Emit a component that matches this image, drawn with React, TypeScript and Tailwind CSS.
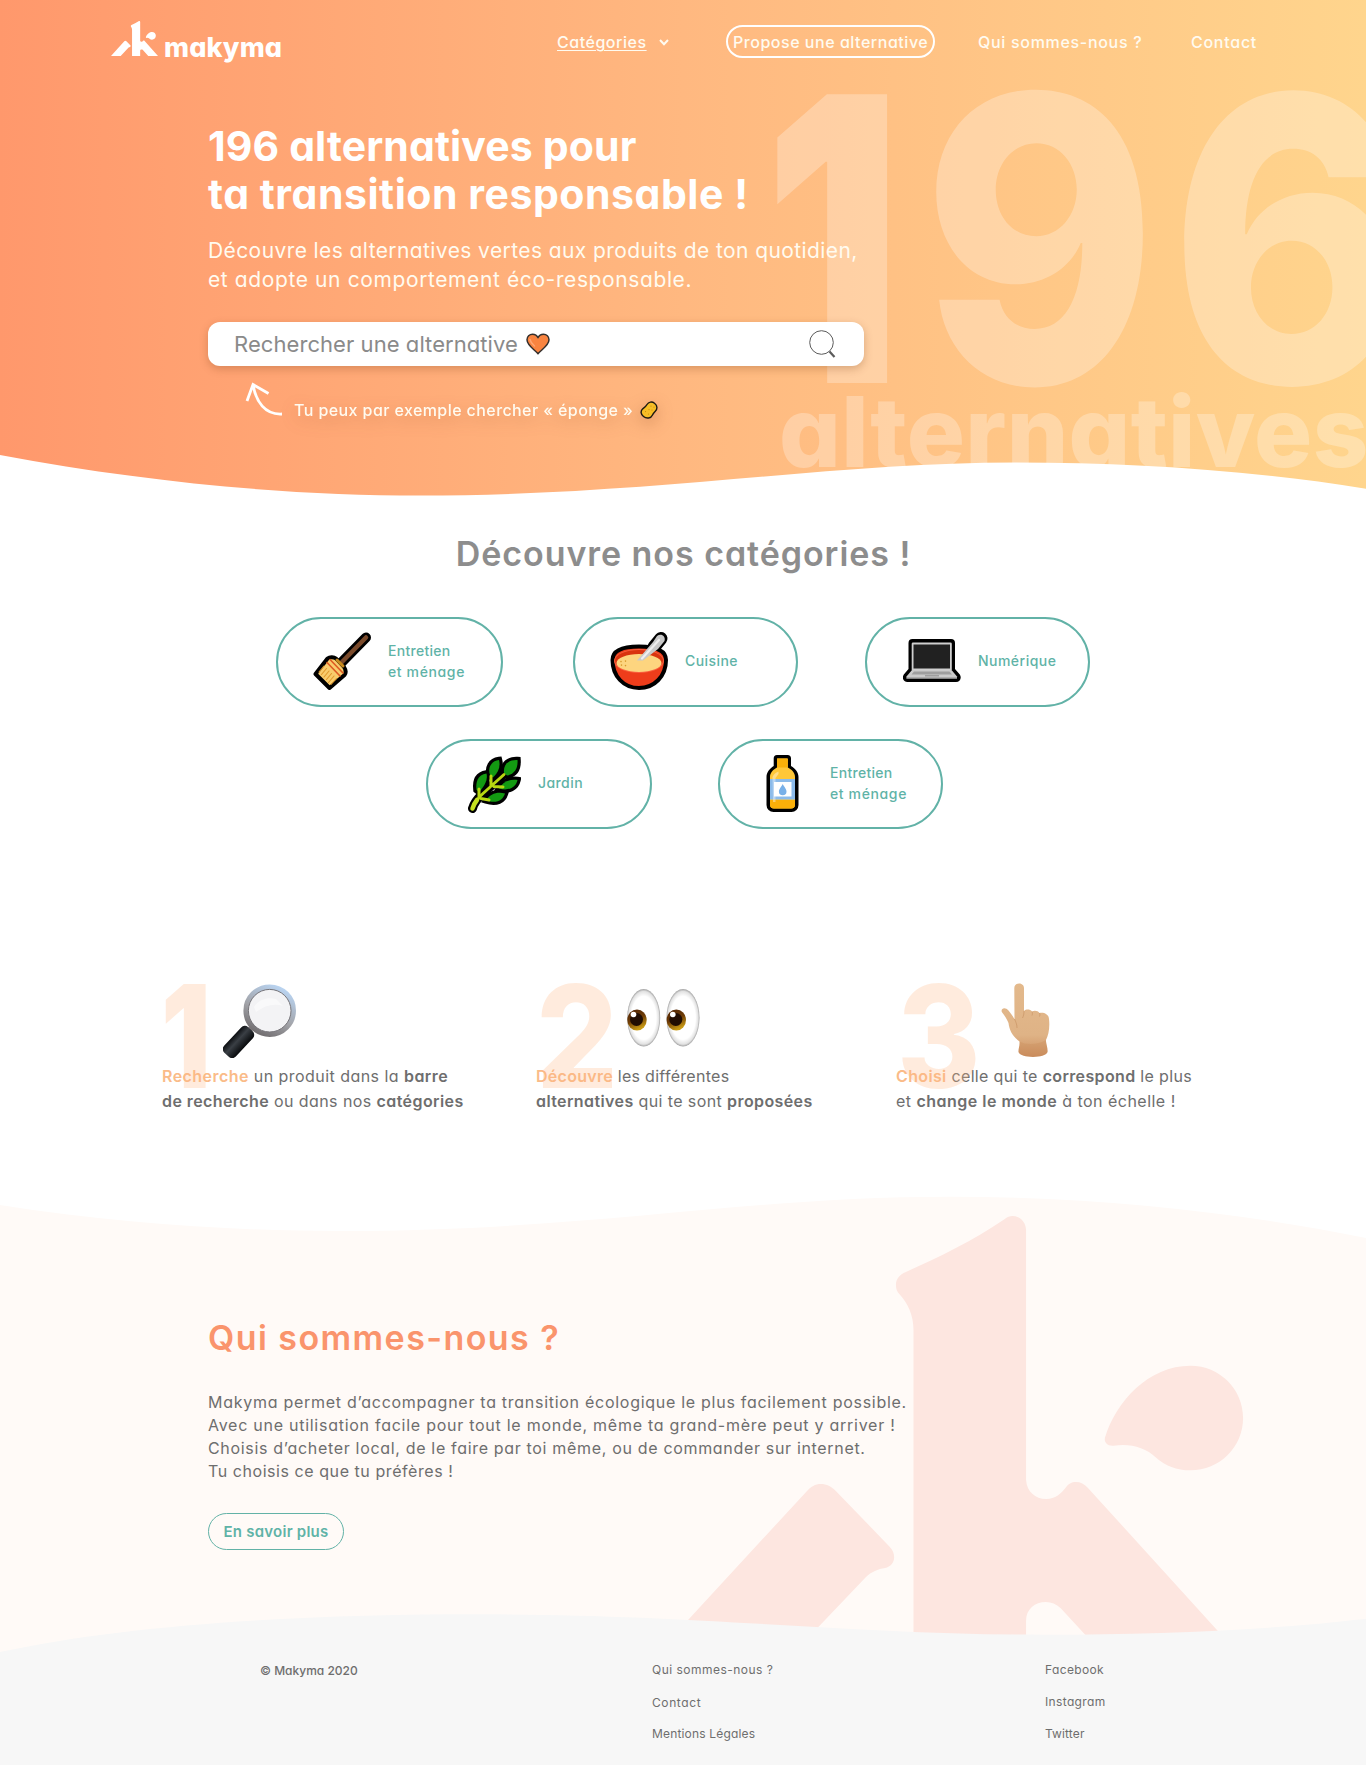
import type { ReactNode } from "react";

function KMark({ className }: { className: string }) {
  return (
    <svg viewBox="622 1216 651 476" preserveAspectRatio="none" className={className} fill="currentColor" aria-hidden="true">
      <g transform="translate(660 1180) scale(.45026 .33333)">
        <path d="M813 150V900C815 935 833 957 858 957C878 957 890 942 900 925C907 911 914 906 924 906C934 906 942 912 950 923L1362 1536H1062L890 1285C880 1272 869 1266 857 1266C833 1266 813 1287 813 1322V1536H563V450C563 405 550 370 532 343C526 334 524 326 524 315C524 297 532 284 546 276C620 232 695 182 765 118C771 111 777 108 783 108C800 108 813 127 813 150Z" />
        <path d="M325 935C335 920 345 912 357 912C370 912 381 920 390 932L510 1100C517 1110 520 1120 520 1132C520 1148 512 1161 500 1164C484 1167 470 1175 457 1192L214 1536H-85Z" />
        <path d="M1178 557C1243 557 1295 627 1295 714C1295 801 1243 871 1178 871C1148 871 1121 856 1102 833C1077 802 1045 790 1008 797C995 799 986 788 988 774C1012 665 1085 557 1178 557Z" />
      </g>
    </svg>
  );
}

function Broom() {
  return (
    <svg viewBox="0 0 58 58" className="mb-[2px] size-[58px] shrink-0" strokeLinecap="round" strokeLinejoin="round" fill="none">
      <path d="M53 5.500 28 31" stroke="#000" strokeWidth="10" />
      <path d="M14.500 26.500C17 24.500 21 25 23 26.500L31 35C33 38 33 41 31.500 43L16.500 56 2.500 42Z" fill="#F9CC6C" stroke="#000" strokeWidth="4" />
      <path d="M53 5.500 28 31" stroke="#7A4A2B" strokeWidth="4.500" />
      <path d="M24 28 30 34" stroke="#C88A1E" strokeWidth="3" />
      <path d="M14 30.500 27 44M17 27.500 30 41" stroke="#DE5A22" strokeWidth="1.600" />
      <path d="M11 34 6 40M13.500 36.500 8.500 42.500M16 39 11 45M18.500 41.500 13.500 47.500M21 44 15.500 50.500M23.500 46.500 18 52.500" stroke="#E0992C" strokeWidth="1.100" />
    </svg>
  );
}

function Bowl() {
  return (
    <svg viewBox="0 0 58 58" className="mb-[3px] size-[58px] shrink-0 overflow-visible" strokeLinecap="round" strokeLinejoin="round" fill="none">
      <path d="M51 6.500 44 15" stroke="#000" strokeWidth="13" />
      <path d="M2.500 28C2.500 18 14 14.500 29 14.500S56 18 56 28C56 44 44.500 56 29 56S2.500 44 2.500 28Z" fill="#EE3D1B" stroke="#000" strokeWidth="4" />
      <ellipse cx="29" cy="29" rx="25" ry="12" fill="#F9603F" />
      <ellipse cx="29" cy="28.500" rx="24" ry="10.500" fill="#D9330F" />
      <ellipse cx="29" cy="31" rx="22.500" ry="9" fill="#FDD57F" />
      <path d="M47 4C51 .8 56 4 54.500 9L48 17 33 28.500H27L43 10Z" fill="#C9C9C9" />
      <path d="M49 8 32 26.500" stroke="#EFEFEF" strokeWidth="2.200" />
      <path d="M11 29.500v.1M15.500 29v.1M11.500 33v.1M15.500 33.500v.1" stroke="#D79A2B" strokeWidth="1.600" />
    </svg>
  );
}

function Laptop() {
  return (
    <svg viewBox="0 0 58 58" className="mb-[2px] ml-px size-[58px] shrink-0">
      <path d="M9.500 7H48a4 4 0 0 1 4 4V37l4.800 5.500C59 46 57 50 53 50H4.500C.5 50-1.500 46 .8 42.500L5.500 37V11a4 4 0 0 1 4-4Z" fill="#000" />
      <path d="M10 10.500H47.500a1.300 1.300 0 0 1 1.300 1.300V38H8.700V11.800A1.300 1.300 0 0 1 10 10.500Z" fill="#CFCFCF" />
      <path d="M10.500 12.500H47V36.500H10.500Z" fill="#212121" />
      <path d="M9 38H48.500L54 44.500V46.500H3.500V44.500Z" fill="#CBCBCB" />
      <path d="M11 39.500H46.500L49 42.500H8.500Z" fill="#9E9E9E" />
      <path d="M22 43H36V44.500H22Z" fill="#9E9E9E" />
      <path d="M3.500 45.500H54V46.800H3.500Z" fill="#8D8D8D" />
    </svg>
  );
}

function LeafArt({ outline }: { outline?: boolean }) {
  const leaf = outline ? "#000" : "#139A12";
  return (
    <g fill={leaf} stroke={outline ? "#000" : "none"} strokeWidth={outline ? 6.5 : 0} strokeLinejoin="miter">
      <path d="M54.500 5C55 13 52 19 44 20.500L41 18C40 9 46 4.500 54.500 5Z" />
      <path d="M36 5C37.500 11 36 17 30 22.500L27 20C24.500 13 28 6 36 5Z" />
      <path d="M23.500 18.500C25 24 22 31 16 37L13.500 35C12.500 27 14.500 20 23.500 18.500Z" />
      <path d="M54.500 25C53 32 46 36.500 36 33.500C40 27 46 24 54.500 25Z" />
      <path d="M42 38.500C40 45 34 49 23 45.500C27 39 34 36.500 42 38.500Z" />
    </g>
  );
}

function Leaf() {
  return (
    <svg viewBox="0 0 58 58" className="size-[58px] shrink-0" strokeLinecap="round" fill="none">
      <LeafArt outline />
      <path d="M9.500 53.500C11 48 15 43 20 38.500L42 18" stroke="#000" strokeWidth="9" />
      <LeafArt />
      <path d="M9.500 53.500C11 48 15 43 20 38.500L41 19.500M28 31V21M16 42V34M31 31.500 40 32M18 43.500 26 45" stroke="#B7D711" strokeWidth="3" />
      <path d="M9.500 53.500C10.500 50 12 47.500 14 45" stroke="#C5E020" strokeWidth="4.500" />
    </svg>
  );
}

function Bottle() {
  return (
    <svg viewBox="1.500 0 58 58" className="size-[58px] shrink-0">
      <path d="M23.500 0H34a3.500 3.500 0 0 1 3.500 3.500V11C42 13.500 45 17.500 45 22V50a7 7 0 0 1-7 7H20a7 7 0 0 1-7-7V22C13 17.500 16 13.500 20.200 11V3.500A3.500 3.500 0 0 1 23.500 0Z" fill="#000" />
      <path d="M24 3.500H33.500a.8.8 0 0 1 .8.8V12.500C39 15 41.500 18 41.500 22V49.500a4 4 0 0 1-4 4H20.500a4 4 0 0 1-4-4V22C16.500 18 19 15 23.500 12.500V4.300A.8.8 0 0 1 24 3.500Z" fill="#FFC738" />
      <path d="M23.500 3.500H34.300V12.500H23.500ZM16.500 45H41.500V49.500a4 4 0 0 1-4 4H20.500a4 4 0 0 1-4-4Z" fill="#FAB009" />
      <path d="M16.500 24H41.500V44.500H16.500Z" fill="#8CBBEA" />
      <path d="M20.500 27H38V41.500H20.500Z" fill="#fff" />
      <path d="M29.200 29C31.500 33 33 34.500 33 36.500A3.800 3.800 0 0 1 25.400 36.500C25.400 34.500 27 33 29.200 29Z" fill="#78B0E8" />
      <path d="M19 22C20 19.500 22 17.500 25 16.500V19L22 23V47H19.500Z" fill="#fff" opacity=".4" />
    </svg>
  );
}

function Magnifier() {
  return (
    <svg viewBox="0 0 73 74" className="h-[74px] w-[73px]">
      <defs>
        <linearGradient id="ring" x1=".2" y1="1" x2=".7" y2="0">
          <stop offset="0" stopColor="#6E6A6C" />
          <stop offset=".45" stopColor="#A2A3A8" />
          <stop offset="1" stopColor="#B9D3F0" />
        </linearGradient>
        <linearGradient id="grip" x1="0" y1="0" x2="1" y2="0">
          <stop offset="0" stopColor="#0C0E11" />
          <stop offset=".4" stopColor="#3A3F45" />
          <stop offset="1" stopColor="#07090B" />
        </linearGradient>
      </defs>
      <path d="M24 48 32 41" stroke="#8A7F80" strokeWidth="5" />
      <rect x="-8" y="-17.500" width="16" height="35" rx="5" fill="url(#grip)" transform="translate(15.500 58) rotate(43)" />
      <circle cx="46.700" cy="26.700" r="23.800" fill="#F3F3F5" stroke="url(#ring)" strokeWidth="5" />
      <circle cx="46.700" cy="26.700" r="21.300" fill="none" stroke="#77757A" strokeWidth="1" />
      <path d="M31 23C36 15 45 13 53 15L60 22C52 19 42 21 33 28Z" fill="#fff" opacity=".5" />
    </svg>
  );
}

function Eyes() {
  return (
    <svg viewBox="0 0 73 58" className="h-[58px] w-[73px]">
      <defs>
        <radialGradient id="white">
          <stop offset=".75" stopColor="#fff" />
          <stop offset=".92" stopColor="#E2E2E2" />
          <stop offset="1" stopColor="#A2A2A2" />
        </radialGradient>
        <linearGradient id="iris" x1="0" y1="0" x2=".4" y2="1">
          <stop offset="0" stopColor="#4E2204" />
          <stop offset=".55" stopColor="#6E3C06" />
          <stop offset="1" stopColor="#C99A14" />
        </linearGradient>
      </defs>
      {[0, 39.3].map((x) => (
        <g key={x} transform={`translate(${x} 0)`}>
          <ellipse cx="16.700" cy="28.800" rx="16.500" ry="28.700" fill="url(#white)" />
          <ellipse cx="10" cy="31" rx="9.700" ry="10.600" fill="url(#iris)" />
          <circle cx="9.500" cy="30.500" r="6.500" fill="#210D02" />
          <circle cx="6.500" cy="25.500" r="2.800" fill="#fff" />
        </g>
      ))}
    </svg>
  );
}

function Hand() {
  return (
    <svg viewBox="0 0 49 74" className="h-[74px] w-[49px]">
      <defs>
        <linearGradient id="skin" x1=".5" y1="0" x2=".5" y2="1">
          <stop offset="0" stopColor="#E3B98C" />
          <stop offset=".7" stopColor="#DFB386" />
          <stop offset="1" stopColor="#CC8F60" />
        </linearGradient>
      </defs>
      <path d="M13.300 5C13.300-1 23-1 23 5V28C25 26 29 26 31 28.500C34 27 37 28 38.500 30C43 29 48 31.500 48 36C49 45 47.500 52 45 57C44.500 60 47 65 46.500 69C44 75.500 20 75.500 17.500 69C17.500 65 19 62 18.500 58.500C11 53 8.500 47 7.500 40C5.500 35 3 32 .8 29C-.5 25.500 4 23.500 7.500 27.500C10 30.500 11.500 33 13.500 36Z" fill="url(#skin)" />
      <path d="M18.500 58.500C25 62.500 38 61.500 45 57C45 60 46.800 64 46.500 69C44 75.500 20 75.500 17.500 69C17.500 65 19 62 18.500 58.500Z" fill="#C4824F" opacity=".25" />
      <path d="M23 28C23 31 22.500 33 21.500 35M31 28.500C31.500 30 31.500 31 31 32.500M38.500 30C39 31 39 32 38.500 33.500M13.500 36C15 39 16 42 16 45" fill="none" stroke="#B97D4B" strokeWidth=".8" opacity=".5" />
    </svg>
  );
}

function Category({ className, icon, children }: { className: string; icon: ReactNode; children: ReactNode }) {
  return (
    <a className={`flex h-[90px] items-center gap-[17px] rounded-full border-2 border-[#62B2A7] pl-[35px] text-sm/[21px] font-medium text-[#5FB3A7] ${className}`}>
      {icon}
      <span className="pb-[3px] whitespace-nowrap">{children}</span>
    </a>
  );
}

function Lead({ children }: { children: ReactNode }) {
  return <span className="font-semibold text-[#FABB88]">{children}</span>;
}

function B({ children }: { children: ReactNode }) {
  return <b className="font-semibold">{children}</b>;
}

export default function App() {
  return (
    <div className="w-[1366px] overflow-hidden bg-white font-['Inter',sans-serif] whitespace-nowrap [font-feature-settings:'cv11']">
      <section className="relative h-[496px] overflow-hidden bg-linear-to-r from-[#FF986C] via-[#FFB880] to-[#FFD58D] text-white">
        <div className="absolute inset-0 font-extrabold text-white/27" aria-hidden="true">
          <span className="absolute top-[40px] left-[764px] origin-left scale-x-[.765] text-[397px] leading-none font-black">1</span>
          <span className="absolute top-[40px] left-[922px] origin-left scale-x-[.895] text-[397px] leading-none">9</span>
          <span className="absolute top-[40px] left-[1170px] origin-left scale-x-[.9] text-[397px] leading-none">6</span>
          <span className="absolute top-[383px] left-[779px] text-[97px] leading-none tracking-[.003em]">alternatives</span>
        </div>
        <svg viewBox="0 0 1366 496" className="absolute inset-0 h-[496px] w-[1366px]" aria-hidden="true">
          <path d="M0 455C150 483 290 495.500 420 495.500C650 495.500 830 462.500 1015 462.500C1130 462.500 1250 470 1366 488.700V496H0Z" fill="#fff" />
        </svg>

        <div className="relative">
          <header className="flex h-[83px] items-start pl-[111px]">
            <a className="flex w-[446px] pt-[21px]">
              <KMark className="h-[35px] w-[47px]" />
              <span className="mt-[13px] ml-[6px] text-[27px] leading-none font-extrabold tracking-[.004em]">makyma</span>
            </a>
            <nav className="flex h-[83px] items-center text-base font-medium text-[#FFFBF0]">
              <a className="flex w-[169px] items-center gap-[12px] pt-px tracking-[.033em]">
                <span className="underline decoration-1 underline-offset-2">Catégories</span>
                <svg viewBox="0 0 10 7" className="h-[7px] w-[10px]" fill="none" stroke="currentColor" strokeWidth="2">
                  <path d="M1 1 5 5.200 9 1" />
                </svg>
              </a>
              <a className="flex h-[33px] w-[209px] items-center rounded-full border-2 border-white pt-px pl-[5px] tracking-[.033em]">Propose une alternative</a>
              <a className="ml-[43px] w-[213px] pt-px tracking-[.043em]">Qui sommes-nous ?</a>
              <a className="pt-px tracking-[.046em]">Contact</a>
            </nav>
          </header>

          <div className="pl-[208px]">
            <h1 className="mt-[39px] text-[41px]/[48px] font-bold">
              <span className="block tracking-[.003em]">196 alternatives pour</span>
              <span className="block tracking-[.013em]">ta transition responsable !</span>
            </h1>
            <p className="mt-[18px] text-[21px]/[29px] text-[#FFFBF0]">
              <span className="block tracking-[.0195em]">Découvre les alternatives vertes aux produits de ton quotidien,</span>
              <span className="block tracking-[.029em]">et adopte un comportement éco-responsable.</span>
            </p>
            <div className="mt-[28px] flex h-[44px] w-[656px] items-center rounded-xl bg-white pr-[28px] pl-[26px] shadow-[0_3px_8px_rgba(120,60,20,0.28)]">
              <span className="text-[22px] tracking-[.003em] text-[#8A8A8A]">Rechercher une alternative</span>
              <svg viewBox="0 0 24 22" className="ml-[8px] h-[22px] w-[24px]" aria-hidden="true">
                <path d="M12 20.800C9 17 1 12.500 1 6.800C1 3.500 3.500 1.200 6.500 1.200C9 1.200 11 2.500 12 4.800C13 2.500 15 1.200 17.500 1.200C20.500 1.200 23 3.500 23 6.800C23 12.500 15 17 12 20.800Z" fill="#F98440" stroke="#35302D" strokeWidth="1.500" strokeLinejoin="round" />
                <path d="M4 6.500C4.500 9 6 11 8.500 13" fill="none" stroke="#FFA672" strokeWidth="1.500" strokeLinecap="round" />
              </svg>
              <svg viewBox="0 0 27 28" className="ml-auto h-[28px] w-[27px]" fill="none" stroke="#5B5B5B" aria-hidden="true">
                <circle cx="12.500" cy="12.500" r="11.800" strokeWidth="1" />
                <path d="M20.500 21.500 25.500 27" strokeWidth="2.200" />
              </svg>
            </div>
            <div className="mt-[16px] flex pl-[37px]">
              <svg viewBox="0 0 38 34" className="h-[34px] w-[38px]" fill="none" stroke="#fff" strokeWidth="2.800" aria-hidden="true">
                <path d="M2 19 8 2.500 23.500 11.500M8 2.500C11 20 20 33 37 32" />
              </svg>
              <div className="ml-[11px] flex drop-shadow-[0_5px_8px_rgba(130,60,20,0.3)]">
                <span className="mt-[18px] text-base/[20px] font-medium tracking-[.026em] text-[#FFFBF0]">Tu peux par exemple chercher « éponge »</span>
                <svg viewBox="0 0 18 18" className="mt-[19px] ml-[7px] size-[18px]" aria-hidden="true">
                  <path d="M7 3.500C8.500.8 12 .3 14.500 2.200C17.500 4.500 17.500 8 15.500 10C14 11.500 13.500 12 12.500 14C11 17.500 6.500 18 3.500 15.500C.5 13 .5 10 2.500 8C4.500 6.500 6 5.500 7 3.500Z" fill="#F7BE26" stroke="#1E1A12" strokeWidth="1.400" />
                  <path d="M11 5v.1M14 6v.1M9 8.500v.1M5.500 10.500v.1M8.500 13v.1M12 9v.1" stroke="#C98A10" strokeWidth="1.200" strokeLinecap="round" />
                </svg>
              </div>
            </div>
          </div>
        </div>
      </section>

      <section className="h-[485px]">
        <h2 className="pt-[38px] pl-px text-center text-[34px]/[40px] font-semibold tracking-[.028em] text-[#8D8D8D]">Découvre nos catégories !</h2>
        <div className="mt-[43px] flex pl-[276px]">
          <Category className="w-[227px]" icon={<Broom />}>
            <span className="block tracking-[.02em]">Entretien</span>
            <span className="block tracking-[.045em]">et ménage</span>
          </Category>
          <Category className="ml-[70px] w-[225px]" icon={<Bowl />}>
            <span className="tracking-[.03em]">Cuisine</span>
          </Category>
          <Category className="ml-[67px] w-[225px]" icon={<Laptop />}>
            <span className="tracking-[.034em]">Numérique</span>
          </Category>
        </div>
        <div className="mt-8 flex pl-[426px]">
          <Category className="w-[226px]" icon={<Leaf />}>
            <span className="tracking-[.03em]">Jardin</span>
          </Category>
          <Category className="ml-[66px] w-[225px]" icon={<Bottle />}>
            <span className="block tracking-[.02em]">Entretien</span>
            <span className="block tracking-[.045em]">et ménage</span>
          </Category>
        </div>
      </section>

      <section className="flex h-[215px] pl-[162px] text-base/[25px] text-[#6E6E6E]">
        <div className="relative w-[374px]">
          <div className="flex h-[83px] items-start pt-[3px] pl-[61px]"><Magnifier /></div>
          <p className="tracking-[.028em]"><Lead>Recherche</Lead> un produit dans la <B>barre</B></p>
          <p className="tracking-[.026em]"><B>de recherche</B> ou dans nos <B>catégories</B></p>
          <span className="absolute top-[-17px] left-[-1px] origin-left scale-x-[.77] text-[143px] leading-none font-black text-[#FFB482]/27">1</span>
        </div>
        <div className="relative w-[360px]">
          <div className="flex h-[83px] items-start pt-[8px] pl-[91px]"><Eyes /></div>
          <p className="tracking-[.018em]"><Lead>Découvre</Lead> les différentes</p>
          <p className="tracking-[.025em]"><B>alternatives</B> qui te sont <B>proposées</B></p>
          <span className="absolute top-[-17px] left-0 origin-left scale-x-[.9] text-[143px] leading-none font-extrabold text-[#FFB482]/27">2</span>
        </div>
        <div className="relative">
          <div className="flex h-[83px] items-start pt-[2px] pl-[105px]"><Hand /></div>
          <p className="tracking-[.022em]"><Lead>Choisi</Lead> celle qui te <B>correspond</B> le plus</p>
          <p className="tracking-[.03em]">et <B>change le monde</B> à ton échelle !</p>
          <span className="absolute top-[-17px] left-[1px] origin-left scale-x-[.89] text-[143px] leading-none font-extrabold text-[#FFB482]/27">3</span>
        </div>
      </section>

      <section className="relative h-[456px] overflow-hidden bg-[#FFFAF7]">
        <svg viewBox="0 0 1366 44" className="absolute top-0 left-0 h-[44px] w-[1366px]" aria-hidden="true">
          <path d="M0 9C120 28 240 35 341 35C590 35 740 .7 950 .7C1090 .7 1240 16 1366 42V0H0Z" fill="#fff" />
        </svg>
        <KMark className="absolute top-[20px] left-[622px] h-[476px] w-[651px] text-[#FDE6E0]" />
        <div className="relative pt-[122px] pl-[208px]">
          <h2 className="text-[34px]/[40px] font-semibold tracking-[.042em] text-[#FA946C]">Qui sommes-nous ?</h2>
          <p className="mt-[33px] text-base/[23px] text-[#6E6E6E]">
            <span className="block tracking-[.045em]">Makyma permet d’accompagner ta transition écologique le plus facilement possible.</span>
            <span className="block tracking-[.046em]">Avec une utilisation facile pour tout le monde, même ta grand-mère peut y arriver !</span>
            <span className="block tracking-[.042em]">Choisis d’acheter local, de le faire par toi même, ou de commander sur internet.</span>
            <span className="block tracking-[.035em]">Tu choisis ce que tu préfères !</span>
          </p>
          <a className="mt-[30px] flex h-[37px] w-[136px] items-center justify-center rounded-full border border-[#62B2A7] pt-px text-[15px] font-semibold tracking-[.016em] text-[#5FB3A7]">En savoir plus</a>
        </div>
      </section>

      <footer className="relative -mt-[38px] h-[151px] text-xs/[20px] text-[#6E6E6E]">
        <svg viewBox="0 0 1366 151" className="absolute inset-0 h-[151px] w-[1366px]" aria-hidden="true">
          <path d="M0 38C130 10 300 .3 483 .3C700 .3 850 20.700 1045 20.700C1160 20.700 1270 16 1366 4.700V151H0Z" fill="#F7F7F7" />
        </svg>
        <div className="relative flex pt-[46px] pl-[260px]">
          <p className="w-[392px] pt-px font-medium">© Makyma 2020</p>
          <ul className="w-[393px]">
            <li className="tracking-[.04em]">Qui sommes-nous ?</li>
            <li className="mt-[13px] tracking-[.05em]">Contact</li>
            <li className="mt-[11px] tracking-[.014em]">Mentions Légales</li>
          </ul>
          <ul className="tracking-[.03em]">
            <li>Facebook</li>
            <li className="mt-[12px]">Instagram</li>
            <li className="mt-[12px] tracking-[.01em]">Twitter</li>
          </ul>
        </div>
      </footer>
    </div>
  );
}
